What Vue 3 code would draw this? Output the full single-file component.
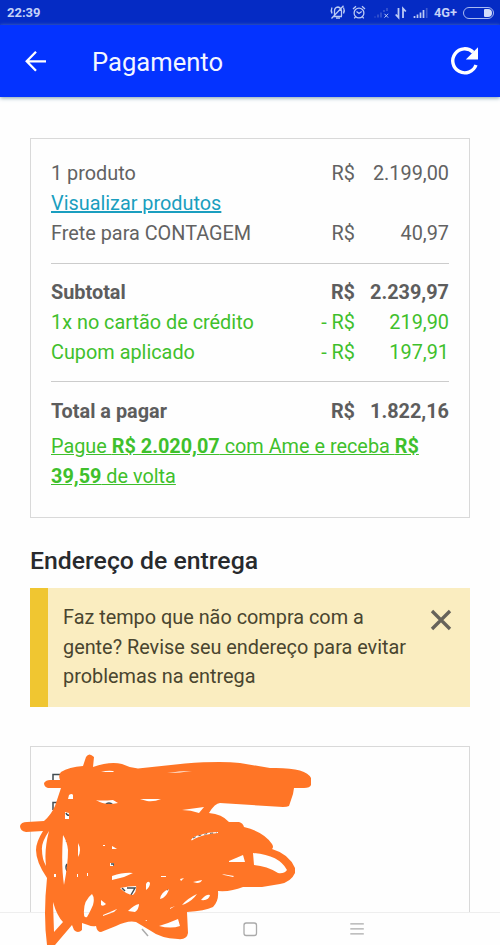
<script setup>
const products = [
  { label: '1 produto', sign: 'R$', value: '2.199,00' },
  { label: 'Visualizar produtos', link: true },
  { label: 'Frete para CONTAGEM', sign: 'R$', value: '40,97' },
]
const subtotal = [
  { label: 'Subtotal', sign: 'R$', value: '2.239,97', kind: 'strong' },
  { label: '1x no cartão de crédito', sign: '- R$', value: '219,90', kind: 'discount' },
  { label: 'Cupom aplicado', sign: '- R$', value: '197,91', kind: 'discount' },
]
const total = [{ label: 'Total a pagar', sign: 'R$', value: '1.822,16', kind: 'strong' }]
const groups = [products, subtotal, total]
</script>

<template>
  <div class="screen">
    <div class="status">
      <span class="clock">22:39</span>
      <svg class="status-icons" width="104" height="18" viewBox="326 4 104 18" fill="none" stroke="#bccbf5" stroke-width="1.3">
        <path d="M333 16.5h9M334.5 16v-5q0-3.5 3.5-4 3 .5 3.5 4v5M336 18.2h4M332 7.5q-1.5 3 0 6M343.5 7.5q1.5 3 0 6M343.5 5.8 331.5 18.5" />
        <circle cx="359" cy="13" r="4.9" />
        <path d="M356.5 11.5 359 13.5l2.7-2M353 9l3-2.7M362 6.3 365 9M355.5 17l-1.3 1.4M362.5 17l1.3 1.4" />
        <path stroke="#3f5bd0" stroke-width="1.5" d="M375 17.5v-1M378 17.5v-3M381 17.5v-5M384 12v-2M387 11V8" />
        <path d="m384.5 13.8 3.6 3.8m0-3.8-3.6 3.8" stroke-width="1" />
        <path stroke-width="1.8" d="M398.5 8v9.5l-2.8-3M403 18V8.5l2.8 3" />
        <path stroke-width="1.7" d="M414.5 18v-2M417.5 18v-3.5M420.5 18v-5.5M423.5 18v-8" />
        <path stroke="#3f5bd0" stroke-width="1.7" d="M426.7 18V8" />
      </svg>
      <span class="network">4G+</span>
      <span class="battery"><i /></span>
    </div>

    <header class="appbar">
      <svg width="24" height="24" viewBox="0 0 24 24" fill="none" stroke="#fff" stroke-width="2.3">
        <path d="M22 12.3H3.5M12 2.8 2.7 12.3 12 21.8" />
      </svg>
      <h1>Pagamento</h1>
      <svg class="reload" width="30" height="30" viewBox="0 0 30 30">
        <path d="M26 19A12 12 0 1 1 23.2 6.3" fill="none" stroke="#fff" stroke-width="3.4" />
        <path d="M28 1.3V13.5H15.8Z" fill="#fff" />
      </svg>
    </header>

    <main>
      <section class="card summary">
        <div v-for="(group, i) in groups" :key="i" class="group">
          <div v-for="row in group" :key="row.label" class="row" :class="row.kind">
            <a v-if="row.link">{{ row.label }}</a>
            <span v-else>{{ row.label }}</span>
            <span class="sign">{{ row.sign }}</span>
            <span class="value">{{ row.value }}</span>
          </div>
        </div>
        <p class="cashback">Pague <b>R$ 2.020,07</b> com Ame e receba <b>R$ 39,59</b> de volta</p>
      </section>

      <h2>Endereço de entrega</h2>
      <div class="notice">
        <p>Faz tempo que não compra com a gente? Revise seu endereço para evitar problemas na entrega</p>
        <svg width="22" height="22" viewBox="0 0 22 22" stroke="#66635a" stroke-width="3.3">
          <path d="m2 2 18 18M20 2 2 20" />
        </svg>
      </div>

      <section class="card address"></section>
    </main>

    <nav>
      <svg width="18" height="18" viewBox="0 0 18 18"></svg>
      <svg width="18" height="18" viewBox="0 0 18 18" fill="none" stroke="#aaa" stroke-width="1.3"><rect x="3" y="3" width="12.5" height="12.5" rx="2.2" /></svg>
      <svg width="18" height="18" viewBox="0 0 18 18" fill="none" stroke="#aaa" stroke-width="1.3"><path d="M2.3 3.8h13.5M2.3 8.8h13.5M2.3 13.8h13.5" /></svg>
    </nav>

    <svg class="scribble" width="300" height="195" viewBox="15 750 300 195">
      <g fill="none" stroke="#414b50" stroke-width="1.5">
        <path d="M53 781v-6.5h7M53 810v-7.5h5M105 805q4-4 8 0M66 813q1 3 4 2M66 841q3 2 5 0M67 864q-2 3 0 7M111 864h3v2M122 888l3 3M127 888h8l-4 7M166 888l2 2" />
        <path stroke-width="1" stroke-dasharray="3 3" d="M193 838q10-5 24-5" />
        <path stroke="#aaa" d="m142 929 6 7" />
      </g>
      <path
        class="ink"
        d="M83 766 86 757Q89 752 94 757L93 767Q110 761 122 764 130 768 138 768.5L185 763.5Q220 761 240 763L270 768Q306 767 311 778V785Q310 788 304 788H294L293 794 289 806Q287 807 283 807L220 803Q215 803 209 813 222 814 229 822H239Q243 823 244 827 264 832 272 844 274 847 272 849 289 854 295 868V873Q291 882 280 884L262 887 243 887Q231 892 218 891 219 901 213 907 205 911 187 912L188 933Q187 940 178 939 160 938 151 931L136 922Q128 920 116 926L101 932Q97 932 96 926 92 927 88 925L82 923 82 930Q78 934 74 930L72 925 55 945H47Q43 915 47 878 36 862 36 850 36 842 43 831L26 832Q20 831 20 826 21 822 27 822L44 821Q51 815 55 806L61 788 48 788Q44 787 44 783 46 780 50 780L60 780Q58 775 61 772 69 767 83 766Z
        M101 772q7-2 12-1l1 1-13 0Z M167 773q12-2 25-2-12 2-25 2Z
        M69 795q3-2 4 0v4h-5Z M96 800q4 1 17 0l5 3q-13 3-22-3Z M140 799l21 0q-7 3-14 2Z
        M182 810l22-3-5 6q-8-3-17-3Z M65 812l4 1 0 6-4 0Z
        M49 831Q41 843 42 850 42 859 46 866 44 850 49 831Z
        M63 835Q67 841 68 850 68 865 64 885 61 865 63 835Z M78 843q4 7 0 14Z
        M54 874h2v3h-2Z M77 874h1v3h-1Z M87 873h1v3h-1Z
        M191 840q2-4 9-5 8-3 18-3v1q-14 1-24 6-2 2-3 1Z M112 846q2 1 5 3l-5 0Z M103 845h2v1h-2Z
        M110 863h4v3h-4Z
        M229 861l14-6 2 7h-16Z M253 853q26 2 34 17-3 4-9 3-11-7-24-8Z
        M112 876q12-4 21-3l-9 4-12 3Z M120 888q9-2 16-2 1 5-3 9-6 0-13-7Z
        M146 884q2-4 4-1 0 4-4 7Z M161 876h5v1h-5Z M180 879l4-1-3 3Z M193 882l9-2q-1 3-5 3Z
        M222 874l12 2-1 1-9-2Z M160 899q1-7 9-10-1 5-6 9Z
        M84 914Q83 901 92 894 95 898 93 905 89 914 87 917 84 918 84 914Z
        M101 900l5 4q-3 3-5 1Z M103 915l14-6-3 3-11 4Z M128 911q6-6 11-7 0 5-4 8Z M182 905q6-7 15-11-4 6-12 10Z M201 900q5-6 9-5-1 6-9 5Z
        M170 908l5-2-5 3Z M53 902Q57 916 63 922L54 932Z M159 926q10-3 19-7l2 7q-9 3-21 0Z M145 921l2-1v1Z"
      />
    </svg>
  </div>
</template>

<style>
body { margin: 0; }
</style>

<style scoped>
.screen {
  position: relative;
  width: 500px;
  height: 945px;
  display: flex;
  flex-direction: column;
  overflow: hidden;
  background: #fefefe;
  font-family: Roboto, sans-serif;
  font-size: 19.85px;
  line-height: 29.7px;
  color: #626262;
}
h1, h2, p { margin: 0; }
.status {
  height: 25px;
  flex: none;
  box-sizing: border-box;
  padding: 0 6px 0 7px;
  display: flex;
  align-items: center;
  background: #052bc4;
  color: #c5d2f8;
  font-size: 13px;
  font-weight: 700;
}
.status-icons { margin-left: auto; }
.network { margin: 0 6px 0 4px; font-size: 12.8px; line-height: 25px; }
.battery {
  width: 31px;
  height: 12px;
  box-sizing: border-box;
  border: 1px solid #a9baf1;
  border-radius: 6px;
  display: flex;
  justify-content: flex-end;
  padding: 1px;
}
.battery i { width: 8px; background: #d3ddfb; border-radius: 1px 4px 4px 1px; }
.appbar {
  height: 72px;
  flex: none;
  box-sizing: border-box;
  padding: 0 20px 0 24px;
  display: flex;
  align-items: center;
  background: #0433ff;
  box-shadow: 0 1px 4px #7c9cab;
  z-index: 1;
}
h1 { margin-left: 44px; padding-top: 4px; color: #f3f6ff; font-size: 25.6px; font-weight: 400; }
.reload { margin-left: auto; }
main { flex: 1; min-height: 0; overflow: hidden; padding: 41px 30px 0; }
.card { box-sizing: border-box; border: 1px solid #d9d9d9; }
.summary { height: 380px; padding: 20.3px 20px 0; }
.group + .group { border-top: 1px solid #ccc; margin-top: 14.2px; padding-top: 14.7px; }
.row { display: grid; grid-template-columns: 1fr auto 94px; height: 29.7px; }
.row a { color: #1a9ebf; text-decoration: underline; text-decoration-thickness: 1.5px; }
.value { text-align: right; }
.strong { font-weight: 700; color: #5d5d5d; }
.discount, .cashback { color: #3fc02c; }
.cashback { margin-top: 5.5px; text-decoration: underline; }
h2 { margin: 28px 0 12px; color: #282a2d; font-size: 24.8px; font-weight: 500; line-height: 30px; }
.notice {
  height: 119px;
  box-sizing: border-box;
  padding: 15px 18px 0 15px;
  border-left: 18px solid #f0c631;
  background: #faedc0;
  color: #49452f;
  display: flex;
  justify-content: space-between;
}
.notice p { width: 350px; }
.notice svg { margin-top: 6px; }
.address { margin-top: 39px; height: 220px; }
nav {
  height: 32px;
  flex: none;
  display: flex;
  align-items: center;
  justify-content: center;
  gap: 89px;
  border-top: 1px solid #eee;
  background: #fefefe;
}
.scribble { position: absolute; left: 15px; top: 750px; }
.ink { fill: #ff7526; fill-rule: evenodd; }
</style>
